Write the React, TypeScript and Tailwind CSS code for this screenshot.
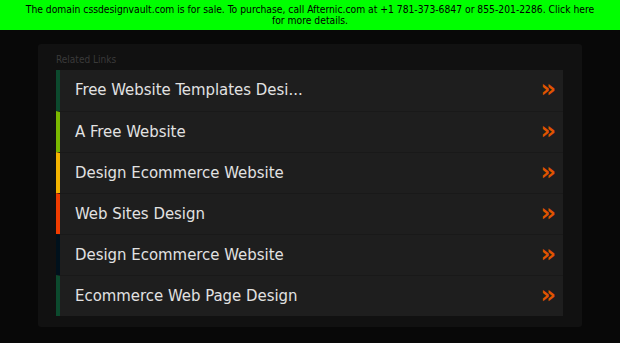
import React from 'react';

const links = [
  { title: 'Free Website Templates Desi...', color: 'border-[#0c4a2e]' },
  { title: 'A Free Website', color: 'border-[#7ab800]' },
  { title: 'Design Ecommerce Website', color: 'border-[#f4b400]' },
  { title: 'Web Sites Design', color: 'border-[#f03c00]' },
  { title: 'Design Ecommerce Website', color: 'border-[#00111c]' },
  { title: 'Ecommerce Web Page Design', color: 'border-[#0c4a2e]' },
];

const App = () => {
  return (
    <div className="min-h-screen w-[620px] h-[343px] bg-[#080808] font-['DejaVu_Sans_Condensed','DejaVu_Sans',sans-serif] overflow-hidden">
      {/* Sale banner */}
      <div className="h-[30px] bg-[#00ff00] text-black text-[10.25px] leading-[11px] text-center pt-[4px]">
        <div className="max-w-[576px] mx-auto">
          The domain cssdesignvault.com is for sale. To purchase, call Afternic.com at +1 781-373-6847 or 855-201-2286. Click here for more details.
        </div>
      </div>

      <div className="px-[38px] pt-[14px]">
        <div className="bg-[#111111] rounded-[3px] pl-[18px] pr-[19px] pt-[9px] pb-[11px]">
          <div className="text-[10px] leading-[13px] text-[#3a3a3a] mb-[4px]">Related Links</div>
          <div>
            {links.map((link, i) => (
              <div
                key={i}
                className={`h-[41px] flex items-center justify-between bg-[#1e1e1e] border-l-4 ${link.color} ${i > 0 ? 'border-t border-t-[#191919]' : ''} pl-[15px] pr-[7px]`}
              >
                <span className="text-[#e2e2e2] text-[16.6px] font-extralight">{link.title}</span>
                <span className="text-[#e05400] text-[24px] font-bold leading-none pb-[3px] font-['DejaVu_Sans',sans-serif]">»</span>
              </div>
            ))}
          </div>
        </div>
      </div>
    </div>
  );
};

export default App;
